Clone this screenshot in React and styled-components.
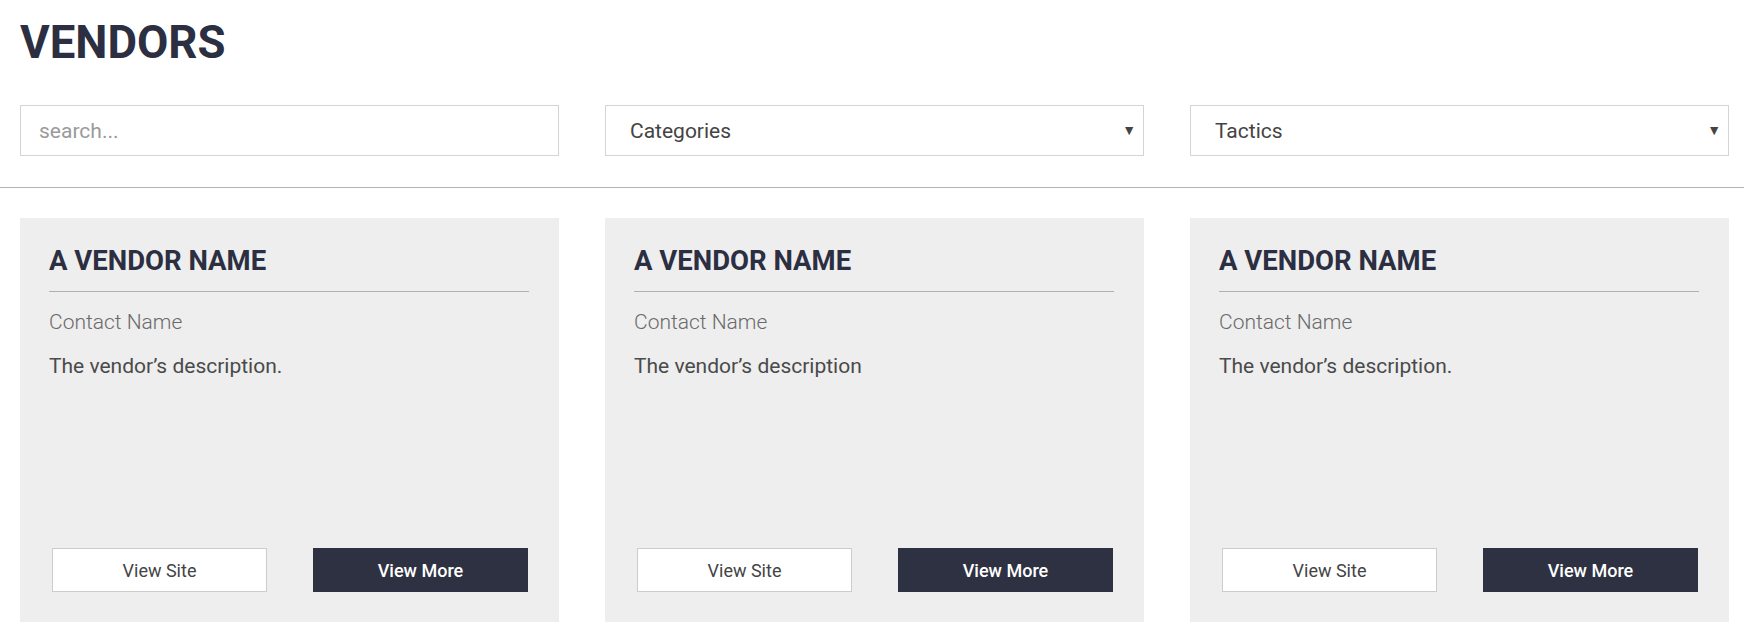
import styled, { createGlobalStyle } from "styled-components";

const vendors = [
  {
    id: 1,
    name: "A VENDOR NAME",
    contact: "Contact Name",
    description: "The vendor’s description.",
  },
  {
    id: 2,
    name: "A VENDOR NAME",
    contact: "Contact Name",
    description: "The vendor’s description",
  },
  {
    id: 3,
    name: "A VENDOR NAME",
    contact: "Contact Name",
    description: "The vendor’s description.",
  },
];

export default function App() {
  return (
    <>
      <GlobalStyle />
      <StyledHeader>
        <StyledTitle>VENDORS</StyledTitle>
        <StyledFilters>
          <StyledSearch type="text" placeholder="search..." />
          <StyledSelectWrapper>
            <StyledSelect defaultValue="">
              <option value="">Categories</option>
            </StyledSelect>
          </StyledSelectWrapper>
          <StyledSelectWrapper>
            <StyledSelect defaultValue="">
              <option value="">Tactics</option>
            </StyledSelect>
          </StyledSelectWrapper>
        </StyledFilters>
      </StyledHeader>
      <StyledDivider />
      <StyledGrid>
        {vendors.map(({ id, name, contact, description }) => (
          <StyledCard key={id}>
            <StyledVendorName>{name}</StyledVendorName>
            <StyledContact>{contact}</StyledContact>
            <StyledDescription>{description}</StyledDescription>
            <StyledButtonRow>
              <StyledButton type="button">View Site</StyledButton>
              <StyledButton type="button" $primary>
                View More
              </StyledButton>
            </StyledButtonRow>
          </StyledCard>
        ))}
      </StyledGrid>
    </>
  );
}

const GlobalStyle = createGlobalStyle`
  * {
    box-sizing: border-box;
  }

  body {
    margin: 0;
    background: #ffffff;
    font-family: Roboto, "Liberation Sans", Arial, sans-serif;
    color: #444444;
  }
`;

const StyledHeader = styled.header`
  padding: 16px 15px 0 20px;
`;

const StyledTitle = styled.h1`
  margin: 0;
  font-size: 45.5px;
  line-height: 54px;
  font-weight: 700;
  color: #2b2f41;
`;

const StyledFilters = styled.div`
  display: grid;
  grid-template-columns: repeat(3, 539px);
  column-gap: 46px;
  margin-top: 35px;
  padding-bottom: 31px;
`;

const StyledSearch = styled.input`
  height: 51px;
  width: 100%;
  padding: 0 18px;
  border: 1px solid #d4d4d4;
  font-family: inherit;
  font-size: 21px;
  color: #444444;
  outline: none;

  &::placeholder {
    color: #9a9a9a;
  }
`;

const StyledSelectWrapper = styled.div`
  position: relative;

  &::after {
    content: "▼";
    position: absolute;
    right: 8px;
    top: 50%;
    transform: translateY(-56%);
    font-size: 14px;
    color: #444444;
    pointer-events: none;
  }
`;

const StyledSelect = styled.select`
  appearance: none;
  -webkit-appearance: none;
  height: 51px;
  width: 100%;
  padding: 0 24px;
  border: 1px solid #d4d4d4;
  border-radius: 0;
  background: #ffffff;
  font-family: inherit;
  font-size: 21px;
  color: #444444;
  outline: none;
`;

const StyledDivider = styled.hr`
  margin: 0;
  border: none;
  border-top: 1px solid #b3b3b3;
`;

const StyledGrid = styled.main`
  display: grid;
  grid-template-columns: repeat(3, 539px);
  column-gap: 46px;
  padding: 30px 15px 10px 20px;
`;

const StyledCard = styled.article`
  display: flex;
  flex-direction: column;
  height: 404px;
  padding: 28px 30px 30px 29px;
  background-color: #eeeeee;
`;

const StyledVendorName = styled.h2`
  margin: 0;
  padding-bottom: 15px;
  border-bottom: 1px solid #b0b0b4;
  font-size: 27.5px;
  line-height: 30px;
  font-weight: 700;
  color: #2b2f41;
`;

const StyledContact = styled.p`
  margin: 18px 0 0;
  font-size: 21px;
  line-height: 24px;
  font-weight: 300;
  color: #6a6a6a;
`;

const StyledDescription = styled.p`
  margin: 20px 0 0;
  font-size: 21px;
  line-height: 24px;
  font-weight: 400;
  color: #4a4a4a;
`;

const StyledButtonRow = styled.div`
  display: flex;
  justify-content: space-between;
  margin-top: auto;
  padding: 0 1px 0 3px;
`;

const StyledButton = styled.button`
  width: 215px;
  height: 44px;
  border: 1px solid ${({ $primary }) => ($primary ? "#2d3142" : "#cccccc")};
  background-color: ${({ $primary }) => ($primary ? "#2d3142" : "#ffffff")};
  color: ${({ $primary }) => ($primary ? "#ffffff" : "#444444")};
  font-family: inherit;
  font-size: 18px;
  font-weight: ${({ $primary }) => ($primary ? 500 : 400)};
  cursor: pointer;
`;
